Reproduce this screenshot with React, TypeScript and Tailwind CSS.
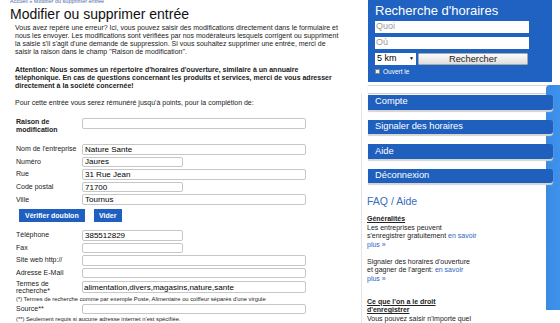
type FieldProps = {
  label: string;
  value?: string;
  wide?: boolean;
};

const intro = [
  'Vous avez repéré une erreur? Ici, vous pouvez saisir des modifications directement dans le formulaire et',
  'nous les envoyer. Les modifications sont vérifiées par nos modérateurs lesquels corrigent ou suppriment',
  "la saisie s'il s'agit d'une demande de suppression. Si vous souhaitez supprimer une entrée, merci de",
  'saisir la raison dans le champ "Raison de modification".',
];

const warning = [
  "Attention: Nous sommes un répertoire d'horaires d'ouverture, similaire à un annuaire",
  'téléphonique. En cas de questions concernant les produits et services, merci de vous adresser',
  'directement à la société concernée!',
];

const menu = ['Compte', 'Signaler des horaires', 'Aide', 'Déconnexion'];

function TextBox({ value, wide }: { value?: string; wide?: boolean }) {
  return (
    <input
      readOnly
      value={value ?? ''}
      className={`h-[10.7px] shrink-0 rounded-[2px] border border-[#c6c6c6] bg-white p-0 pl-[2px] text-[8px] leading-[9px] text-black outline-none ${
        wide ? 'w-[224px]' : 'w-[101px]'
      }`}
    />
  );
}

function Field({ label, value, wide }: FieldProps) {
  return (
    <div className="flex h-[12.6px] items-center">
      <span className="w-[66px] shrink-0">{label}</span>
      <TextBox value={value} wide={wide} />
    </div>
  );
}

function MainForm() {
  return (
    <div className="w-[361px] shrink-0 pl-[10px]">
      <div className="-mt-[2.5px] h-[6px] text-[5.5px] leading-[6px] text-[#4a6aa8]">
        Accueil » Modifier ou supprimer entrée
      </div>
      <h1 className="mt-[2px] text-[14px] leading-[16px] text-[#111]">Modifier ou supprimer entrée</h1>

      <div className="pl-[5px] text-[7px] leading-[8px] whitespace-nowrap">
        <p className="mt-[2.5px]">
          {intro.map((line) => (
            <span key={line} className="block">
              {line}
            </span>
          ))}
        </p>
        <p className="mt-[10px] font-bold">
          {warning.map((line) => (
            <span key={line} className="block">
              {line}
            </span>
          ))}
        </p>
        <p className="mt-[9px]">Pour cette entrée vous serez rémunéré jusqu'à points, pour la complétion de:</p>
      </div>

      <div className="mt-[11px] pl-[6px] text-[7px] leading-[8px] whitespace-nowrap">
        <div className="flex h-[17px] items-start">
          <span className="w-[66px] shrink-0 leading-[7.7px] font-bold">
            Raison de
            <br />
            modification
          </span>
          <TextBox wide />
        </div>

        <div className="mt-[8px] flex flex-col">
          <Field label="Nom de l'entreprise" value="Nature Sante" wide />
          <Field label="Numéro" value="Jaures" />
          <Field label="Rue" value="31 Rue Jean" wide />
          <Field label="Code postal" value="71700" />
          <Field label="Ville" value="Tournus" wide />
        </div>

        <div className="mt-[3px] flex gap-[9px] pl-[3px]">
          <button className="h-[13.5px] bg-[#1f5fbf] px-[6px] text-[7px] font-bold text-white">Vérifier doublon</button>
          <button className="h-[13.5px] w-[28px] bg-[#1f5fbf] text-[7px] font-bold text-white">Vider</button>
        </div>

        <div className="mt-[6.5px] flex flex-col">
          <Field label="Téléphone" value="385512829" />
          <Field label="Fax" />
          <Field label="Site web http://" wide />
          <Field label="Adresse E-Mail" wide />
        </div>

        <div className="mt-[1.5px] flex h-[14.5px] items-start">
          <span className="w-[66px] shrink-0 leading-[6.8px]">
            Termes de
            <br />
            recherche*
          </span>
          <input
            readOnly
            value="alimentation,divers,magasins,nature,sante"
            className="mt-[0.5px] h-[12px] w-[224px] rounded-[2px] border border-[#c6c6c6] bg-white p-0 pl-[1px] text-[8px] text-black outline-none"
          />
        </div>
        <p className="mt-[0.8px] text-[5.8px] leading-[6.5px]">
          (*) Termes de recherche comme par exemple Poste, Alimentaire ou coiffeur séparés d'une virgule
        </p>
        <Field label="Source**" wide />
        <p className="mt-[0.8px] text-[5.8px] leading-[6.5px]">
          (**) Seulement requis si aucune adresse internet n'est spécifiée.
        </p>
      </div>
    </div>
  );
}

function SearchBox() {
  return (
    <div className="ml-[7px] h-[82px] w-[184px] bg-[#1f62c1] pt-[2.8px] pl-[7px]">
      <h2 className="text-[13px] leading-[16px] text-white">Recherche d'horaires</h2>
      <div className="mt-[2px] flex h-[12.7px] w-[154px] items-center bg-white pl-[1px] text-[9px] text-[#9a9a9a]">
        Quoi
      </div>
      <div className="mt-[3.5px] flex h-[12.3px] w-[154px] items-center bg-white pl-[1px] text-[9px] text-[#9a9a9a]">
        Où
      </div>
      <div className="mt-[3.5px] flex gap-[2px]">
        <div className="flex h-[12px] w-[41px] items-center justify-between bg-white px-[2px] text-[9px] text-black">
          <span>5 km</span>
          <span className="text-[5px]">▼</span>
        </div>
        <button className="h-[12px] w-[110px] rounded-[1px] border border-[#a9a9a9] bg-linear-to-b from-[#fbfbfb] to-[#dedede] text-[9.3px] leading-[10px] text-[#222]">
          Rechercher
        </button>
      </div>
      <div className="mt-[3px] flex items-center gap-[3px]">
        <span className="h-[5px] w-[5px] border border-[#888] bg-[#eee]" />
        <span className="text-[6.5px] leading-[7px] text-white">Ouvert le</span>
      </div>
    </div>
  );
}

function Sidebar() {
  return (
    <div className="flex w-[199px] shrink-0">
      <div className="w-[185px] shrink-0">
        <SearchBox />
        <div className="mt-[3px] ml-[7px] h-[8px] w-[184px] border-t border-[#d6d6d6] bg-white shadow-[0_1px_1px_#cfcfcf]" />
        <div className="border-l border-[#e4e4e4] pt-[2px] pl-[6px]">
          <div className="flex flex-col gap-[10px]">
            {menu.map((item) => (
              <div
                key={item}
                className="relative z-10 flex h-[14.6px] w-[185px] items-center rounded-r-[3px] bg-[#1f5fbe] pl-[7px] text-[9.3px] text-white shadow-[0_2px_1px_#d4d4d4]"
              >
                {item}
              </div>
            ))}
          </div>

          <div className="-ml-[1px] text-[7px] leading-[8.5px] whitespace-nowrap text-[#222]">
            <h3 className="mt-[12px] text-[10.5px] leading-[12px] text-[#3a6cc0]">FAQ / Aide</h3>
            <p className="mt-[8px]">
              <span className="font-bold underline">Généralités</span>
              <br />
              Les entreprises peuvent
              <br />
              s'enregistrer gratuitement <span className="text-[#2f62c0]">en savoir</span>
              <br />
              <span className="text-[#2f62c0]">plus »</span>
            </p>
            <p className="mt-[8.5px]">
              Signaler des horaires d'ouverture
              <br />
              et gagner de l'argent: <span className="text-[#2f62c0]">en savoir</span>
              <br />
              <span className="text-[#2f62c0]">plus »</span>
            </p>
            <p className="mt-[14.5px]">
              <span className="font-bold underline">Ce que l'on a le droit</span>
              <br />
              <span className="font-bold underline">d'enregistrer</span>
              <br />
              Vous pouvez saisir n'importe quel
            </p>
          </div>
        </div>
      </div>
      <div className="mt-[85px] h-[225px] w-[14px] shrink-0 rounded-tl-[4px] bg-linear-to-r from-[#3a8ae4] to-[#3f93ec]" />
    </div>
  );
}

export default function App() {
  return (
    <div className="flex h-[323px] w-[560px] overflow-hidden bg-white font-['Liberation_Sans',Arial,sans-serif] text-[#222]">
      <MainForm />
      <Sidebar />
    </div>
  );
}
